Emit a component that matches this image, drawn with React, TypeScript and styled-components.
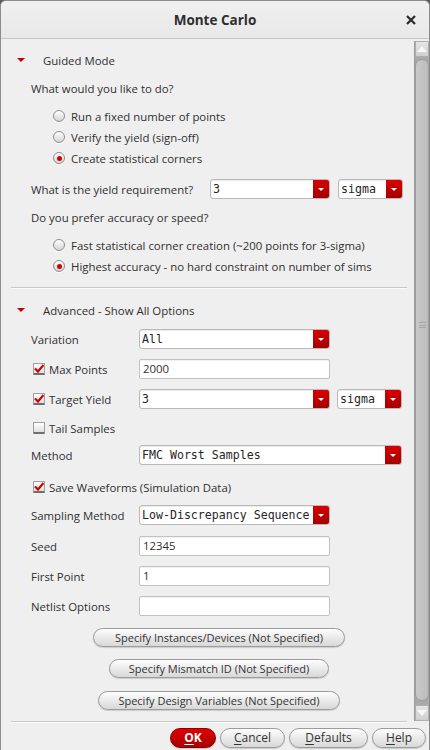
import React from 'react'
import styled, { createGlobalStyle } from 'styled-components'

const GlobalStyle = createGlobalStyle`
  html, body {
    margin: 0;
    padding: 0;
    background: #5c5c5c;
  }
  * {
    box-sizing: border-box;
  }
`

const Dialog = styled.div`
  width: 430px;
  height: 750px;
  display: flex;
  flex-direction: column;
  background: #efefef;
  border: 1px solid #8c8c8c;
  border-bottom: none;
  border-radius: 6px 6px 0 0;
  overflow: hidden;
  font-family: 'Open Sans', 'Noto Sans', sans-serif;
  font-size: 11.4px;
  color: #2f2f2f;
`

const TitleBar = styled.div`
  height: 38px;
  flex: none;
  display: flex;
  align-items: center;
  justify-content: center;
  position: relative;
  background: linear-gradient(#f0f0f0, #e8e8e8);
  border-bottom: 1px solid #c6c6c6;
`

const Title = styled.div`
  font-weight: bold;
  font-size: 13.5px;
  color: #2e2e2e;
`

const CloseButton = styled.div`
  position: absolute;
  right: 13px;
  top: 14px;
  width: 10px;
  height: 10px;
  display: flex;
`

const Body = styled.div`
  flex: 1;
  display: flex;
  min-height: 0;
`

const Content = styled.div`
  flex: 1;
  padding: 0 7px 0 10px;
  display: flex;
  flex-direction: column;
`

const Row = styled.div<{ mt: number; indent?: number }>`
  height: 20px;
  margin-top: ${({ mt }) => mt}px;
  padding-left: ${({ indent }) => indent ?? 20}px;
  display: flex;
  align-items: center;
  flex: none;
`

const Expander = styled.div`
  width: 0;
  height: 0;
  margin-left: 6px;
  margin-right: 18px;
  border-left: 4px solid transparent;
  border-right: 4px solid transparent;
  border-top: 4px solid #c40000;
`

const Label = styled.div<{ w?: number }>`
  width: ${({ w }) => w ?? 108}px;
  flex: none;
  white-space: nowrap;
`

const RadioGroup = styled.div<{ mt: number }>`
  display: flex;
  flex-direction: column;
  gap: 1px;
  margin-top: ${({ mt }) => mt}px;
`

const RadioRow = styled.div`
  height: 20px;
  padding-left: 42px;
  display: flex;
  align-items: center;
  gap: 6px;
`

const RadioCircle = styled.span<{ checked?: boolean }>`
  width: 12px;
  height: 12px;
  border-radius: 50%;
  border: 1px solid #8e8e8e;
  background: linear-gradient(#ffffff, #d4d4d4);
  box-shadow: 0 1px 0 rgba(255, 255, 255, 0.8);
  display: flex;
  align-items: center;
  justify-content: center;
  &::after {
    content: '';
    display: ${({ checked }) => (checked ? 'block' : 'none')};
    width: 5px;
    height: 5px;
    border-radius: 50%;
    background: #d10000;
  }
`

const CheckBox = styled.span`
  width: 12px;
  height: 12px;
  margin-left: 2px;
  margin-right: 4px;
  border: 1px solid #a0a0a0;
  border-bottom: 2px solid #6e6e6e;
  border-radius: 1px;
  background: linear-gradient(#ffffff, #e0e0e0);
  display: flex;
  align-items: center;
  justify-content: center;
  flex: none;
`

const CheckLabel = styled.div`
  width: 90px;
  flex: none;
  white-space: nowrap;
`

const Combo = styled.div<{ w: number }>`
  width: ${({ w }) => w}px;
  height: 20px;
  flex: none;
  display: flex;
  background: #ffffff;
  border: 1px solid #b8b8b8;
  border-radius: 3px;
  overflow: hidden;
  box-shadow: inset 0 1px 1px rgba(0, 0, 0, 0.08);
`

const ComboText = styled.div`
  flex: 1;
  padding-left: 2px;
  font-family: 'DejaVu Sans Mono', 'Liberation Mono', monospace;
  font-size: 11.6px;
  line-height: 18px;
  white-space: nowrap;
  overflow: hidden;
  color: #262626;
`

const ComboArrow = styled.div`
  width: 16px;
  flex: none;
  background: linear-gradient(#d90000, #a30000);
  display: flex;
  align-items: center;
  justify-content: center;
  &::after {
    content: '';
    border-left: 3px solid transparent;
    border-right: 3px solid transparent;
    border-top: 3px solid #ffffff;
  }
`

const Spacer = styled.div<{ w: number }>`
  width: ${({ w }) => w}px;
  flex: none;
`

const TextField = styled.div<{ w: number }>`
  width: ${({ w }) => w}px;
  height: 20px;
  flex: none;
  background: #ffffff;
  border: 1px solid #c2c2c2;
  border-radius: 2px;
  padding-left: 3px;
  font-size: 11.4px;
  line-height: 18px;
  box-shadow: inset 0 1px 1px rgba(0, 0, 0, 0.06);
`

const Separator = styled.div<{ mt: number }>`
  height: 1px;
  margin-top: ${({ mt }) => mt}px;
  background: #c9c9c9;
  border-bottom: 1px solid #fafafa;
  box-sizing: content-box;
  flex: none;
`

const ButtonRow = styled.div<{ mt: number }>`
  margin-top: ${({ mt }) => mt}px;
  padding-left: 20px;
  display: flex;
  justify-content: center;
  flex: none;
`

const PillButton = styled.div<{ w: number }>`
  width: ${({ w }) => w}px;
  height: 19px;
  display: flex;
  align-items: center;
  justify-content: center;
  border: 1px solid #9c9c9c;
  border-radius: 10px;
  background: linear-gradient(#fdfdfd, #d8d8d8);
  box-shadow: 0 1px 1px rgba(0, 0, 0, 0.15);
  white-space: nowrap;
  font-size: 11px;
  color: #333;
`

const ScrollBar = styled.div`
  width: 15px;
  flex: none;
  margin-top: 2px;
  margin-bottom: 1px;
  background: #a9a9a9;
  border-left: 1px solid #9a9a9a;
  display: flex;
  flex-direction: column;
`

const ScrollArrow = styled.div<{ down?: boolean }>`
  height: 16px;
  flex: none;
  background: linear-gradient(#e6e6e6, #cfcfcf);
  border: 1px solid #b0b0b0;
  display: flex;
  align-items: center;
  justify-content: center;
  &::after {
    content: '';
    border-left: 5px solid transparent;
    border-right: 5px solid transparent;
    ${({ down }) => (down ? 'border-top' : 'border-bottom')}: 6px solid #f8f8f8;
  }
`

const ScrollTrack = styled.div`
  flex: 1;
  padding: 2px 0 4px;
  display: flex;
`

const ScrollThumb = styled.div`
  flex: 1;
  background: linear-gradient(90deg, #c8c8c8, #bdbdbd);
  border: 1px solid #9e9e9e;
  border-radius: 7px;
  display: flex;
  align-items: center;
  justify-content: center;
`

const Grip = styled.div`
  width: 7px;
  height: 6px;
  border-top: 1px solid #a6a6a6;
  border-bottom: 1px solid #a6a6a6;
  position: relative;
  margin-bottom: 110px;
  &::after {
    content: '';
    position: absolute;
    left: 0;
    right: 0;
    top: 2px;
    border-top: 1px solid #a6a6a6;
  }
`

const Footer = styled.div`
  height: 28px;
  flex: none;
  display: flex;
  justify-content: flex-end;
  align-items: center;
  gap: 4px;
  padding: 3px 3px 0 0;
`

const FooterButton = styled.div<{ w: number; primary?: boolean }>`
  width: ${({ w }) => w}px;
  height: 20px;
  display: flex;
  align-items: center;
  justify-content: center;
  border-radius: 10px;
  border: 1px solid ${({ primary }) => (primary ? '#8a0000' : '#9c9c9c')};
  background: ${({ primary }) =>
    primary ? 'linear-gradient(#e00000, #a80000)' : 'linear-gradient(#fdfdfd, #d8d8d8)'};
  color: ${({ primary }) => (primary ? '#ffffff' : '#333333')};
  font-weight: ${({ primary }) => (primary ? 'bold' : 'normal')};
  font-size: 12px;
  box-shadow: 0 1px 1px rgba(0, 0, 0, 0.15);
  u {
    text-underline-offset: 2px;
  }
`

const Check = () => (
  <svg width="10" height="9" viewBox="0 0 10 9">
    <path d="M1 4.5 L4 7.5 L9.5 1" fill="none" stroke="#d00000" strokeWidth="2.2" />
  </svg>
)

const Radio = ({ checked, label }: { checked?: boolean; label: string }) => (
  <RadioRow>
    <RadioCircle checked={checked} />
    <span>{label}</span>
  </RadioRow>
)

const Dropdown = ({ w, value }: { w: number; value: string }) => (
  <Combo w={w}>
    <ComboText>{value}</ComboText>
    <ComboArrow />
  </Combo>
)

const App = () => {
  return (
    <>
      <GlobalStyle />
      <Dialog>
        <TitleBar>
          <Title>Monte Carlo</Title>
          <CloseButton>
            <svg width="10" height="10" viewBox="0 0 10 10">
              <path d="M1 1 L9 9 M9 1 L1 9" stroke="#2a2a2a" strokeWidth="2.2" />
            </svg>
          </CloseButton>
        </TitleBar>
        <Body>
          <Content>
            <Row mt={11} indent={0}>
              <Expander />
              <span>Guided Mode</span>
            </Row>
            <Row mt={8}>What would you like to do?</Row>
            <RadioGroup mt={8}>
              <Radio label="Run a fixed number of points" />
              <Radio label="Verify the yield (sign-off)" />
              <Radio checked label="Create statistical corners" />
            </RadioGroup>
            <Row mt={11}>
              <Label w={179}>What is the yield requirement?</Label>
              <Dropdown w={120} value="3" />
              <Spacer w={8} />
              <Dropdown w={65} value="sigma" />
            </Row>
            <Row mt={8}>Do you prefer accuracy or speed?</Row>
            <RadioGroup mt={8}>
              <Radio label="Fast statistical corner creation (~200 points for 3-sigma)" />
              <Radio checked label="Highest accuracy - no hard constraint on number of sims" />
            </RadioGroup>
            <Separator mt={11} />
            <Row mt={11} indent={0}>
              <Expander />
              <span>Advanced - Show All Options</span>
            </Row>
            <Row mt={9}>
              <Label>Variation</Label>
              <Dropdown w={191} value="All" />
            </Row>
            <Row mt={10}>
              <CheckBox><Check /></CheckBox>
              <CheckLabel>Max Points</CheckLabel>
              <TextField w={191}>2000</TextField>
            </Row>
            <Row mt={10}>
              <CheckBox><Check /></CheckBox>
              <CheckLabel>Target Yield</CheckLabel>
              <Dropdown w={191} value="3" />
              <Spacer w={7} />
              <Dropdown w={65} value="sigma" />
            </Row>
            <Row mt={9}>
              <CheckBox />
              <CheckLabel>Tail Samples</CheckLabel>
            </Row>
            <Row mt={7}>
              <Label>Method</Label>
              <Dropdown w={263} value="FMC Worst Samples" />
            </Row>
            <Row mt={12}>
              <CheckBox><Check /></CheckBox>
              <span>Save Waveforms (Simulation Data)</span>
            </Row>
            <Row mt={8}>
              <Label>Sampling Method</Label>
              <Dropdown w={191} value="Low-Discrepancy Sequence" />
            </Row>
            <Row mt={11}>
              <Label>Seed</Label>
              <TextField w={191}>12345</TextField>
            </Row>
            <Row mt={10}>
              <Label>First Point</Label>
              <TextField w={191}>1</TextField>
            </Row>
            <Row mt={10}>
              <Label>Netlist Options</Label>
              <TextField w={191} />
            </Row>
            <ButtonRow mt={12}>
              <PillButton w={252}>Specify Instances/Devices (Not Specified)</PillButton>
            </ButtonRow>
            <ButtonRow mt={12}>
              <PillButton w={220}>Specify Mismatch ID (Not Specified)</PillButton>
            </ButtonRow>
            <ButtonRow mt={13}>
              <PillButton w={242}>Specify Design Variables (Not Specified)</PillButton>
            </ButtonRow>
            <Separator mt={11} />
          </Content>
          <ScrollBar>
            <ScrollArrow />
            <ScrollTrack>
              <ScrollThumb>
                <Grip />
              </ScrollThumb>
            </ScrollTrack>
            <ScrollArrow down />
          </ScrollBar>
        </Body>
        <Footer>
          <FooterButton w={46} primary>
            <u>O</u>K
          </FooterButton>
          <FooterButton w={65}>
            <u>C</u>ancel
          </FooterButton>
          <FooterButton w={79}>
            <u>D</u>efaults
          </FooterButton>
          <FooterButton w={54}>
            <u>H</u>elp
          </FooterButton>
        </Footer>
      </Dialog>
    </>
  )
}

export default App
